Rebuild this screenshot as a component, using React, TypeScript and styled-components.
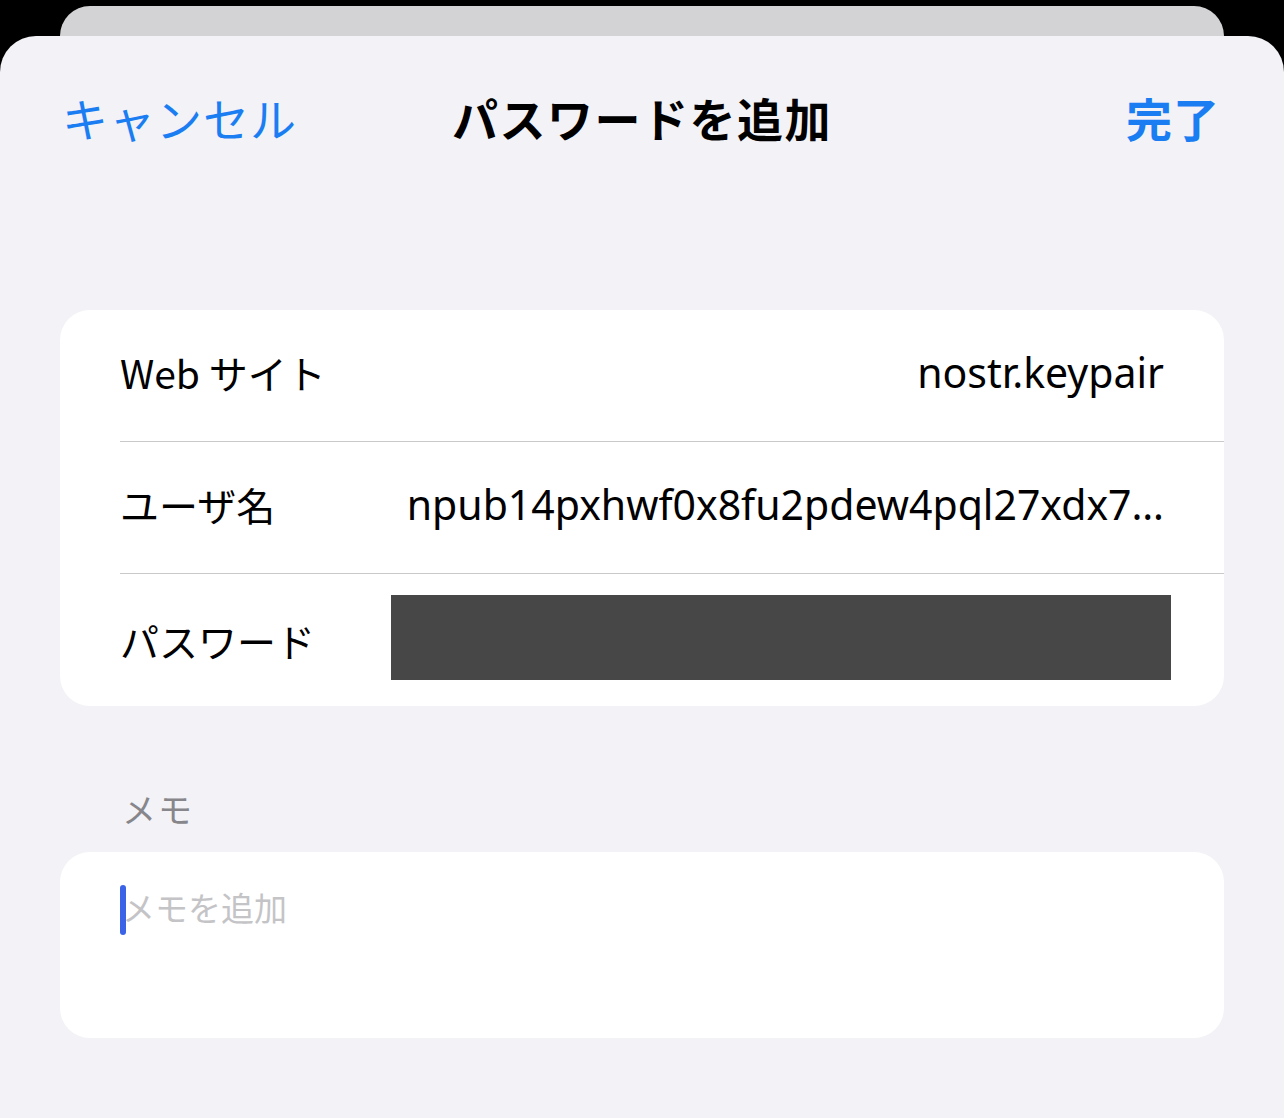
import React from "react";
import styled, { createGlobalStyle } from "styled-components";

const Global = createGlobalStyle`
  html, body { margin: 0; padding: 0; background: #000; }
  body { width: 1284px; height: 1118px; overflow: hidden; font-family: "Noto Sans CJK JP", "Noto Sans", sans-serif; }
`;

const Screen = styled.div`
  width: 1284px;
  height: 1118px;
  background: #000;
  display: flex;
  flex-direction: column;
  align-items: center;
  padding-top: 6px;
  box-sizing: border-box;
`;

const BackSheet = styled.div`
  width: 1164px;
  height: 60px;
  background: #d3d3d6;
  border-radius: 30px 30px 0 0;
  flex-shrink: 0;
`;

const Sheet = styled.div`
  width: 1284px;
  margin-top: -30px;
  flex: 1;
  background: #f2f2f7;
  border-radius: 36px 36px 0 0;
  display: flex;
  flex-direction: column;
  padding: 0 60px;
  box-sizing: border-box;
`;

const NavBar = styled.div`
  display: grid;
  grid-template-columns: 1fr auto 1fr;
  align-items: center;
  height: 162px;
`;

const NavButton = styled.span<{ $bold?: boolean; $align: "left" | "right" }>`
  color: #1a7ef2;
  font-size: 46px;
  font-weight: ${(p) => (p.$bold ? 700 : 400)};
  justify-self: ${(p) => (p.$align === "left" ? "start" : "end")};
  padding: ${(p) => (p.$align === "left" ? "0 0 0 2px" : "0 4px 0 0")};
  letter-spacing: 1px;
`;

const Title = styled.span`
  font-size: 46px;
  font-weight: 700;
  color: #000;
  letter-spacing: 1.5px;
`;

const Card = styled.div<{ $top: number }>`
  margin-top: ${(p) => p.$top}px;
  background: #fff;
  border-radius: 30px;
  overflow: hidden;
`;

const Row = styled.div<{ $sep?: boolean }>`
  height: 132px;
  display: flex;
  align-items: center;
  margin-left: 60px;
  padding-right: 60px;
  border-bottom: ${(p) => (p.$sep ? "1.5px solid #c9c9cc" : "none")};
  box-sizing: border-box;
`;

const TextRow = styled(Row)`
  padding-bottom: 8px;
`;

const Label = styled.span`
  font-size: 39px;
  color: #000;
  width: 284px;
  flex-shrink: 0;
`;

const Value = styled.span`
  flex: 1;
  min-width: 0;
  font-size: 41px;
  color: #000;
  text-align: right;
  white-space: nowrap;
  font-family: "Noto Sans", sans-serif;
`;

const Redacted = styled.div`
  width: 780px;
  height: 85px;
  background: #474747;
  margin-left: -13px;
  margin-right: -9px;
  margin-bottom: 5px;
`;

const SectionHeader = styled.div`
  margin-top: 78px;
  margin-left: 62px;
  font-size: 34px;
  color: #86868b;
  letter-spacing: 2px;
`;

const MemoCard = styled.div`
  margin-top: 19px;
  height: 186px;
  background: #fff;
  border-radius: 30px;
  padding: 33px 60px 0;
  box-sizing: border-box;
  display: flex;
  align-items: flex-start;
`;

const Caret = styled.span`
  display: inline-block;
  width: 6px;
  height: 50px;
  border-radius: 3px;
  background: #3a63e8;
  margin-right: -4px;
`;

const Placeholder = styled.span`
  font-size: 33px;
  color: #c4c4c7;
  line-height: 44px;
`;

export default function App() {
  return (
    <>
      <Global />
      <Screen>
        <BackSheet />
        <Sheet>
          <NavBar>
            <NavButton $align="left">キャンセル</NavButton>
            <Title>パスワードを追加</Title>
            <NavButton $align="right" $bold>完了</NavButton>
          </NavBar>
          <Card $top={112}>
            <TextRow $sep>
              <Label>Web サイト</Label>
              <Value>nostr.keypair</Value>
            </TextRow>
            <TextRow $sep>
              <Label>ユーザ名</Label>
              <Value>npub14pxhwf0x8fu2pdew4pql27xdx7…</Value>
            </TextRow>
            <Row>
              <Label>パスワード</Label>
              <Redacted />
            </Row>
          </Card>
          <SectionHeader>メモ</SectionHeader>
          <MemoCard>
            <Caret />
            <Placeholder>メモを追加</Placeholder>
          </MemoCard>
        </Sheet>
      </Screen>
    </>
  );
}
